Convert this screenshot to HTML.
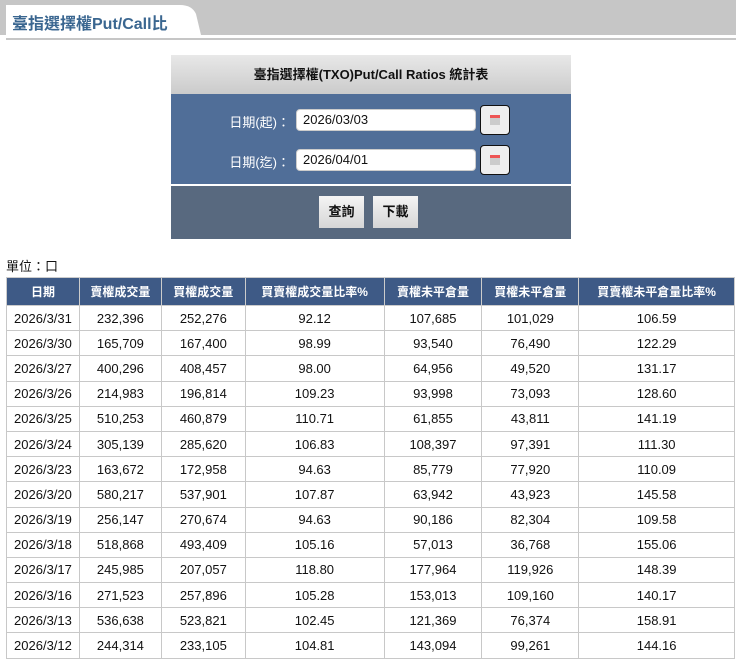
<!DOCTYPE html>
<html><head><meta charset="utf-8"><style>
*{margin:0;padding:0;box-sizing:border-box}
body{width:740px;height:659px;overflow:hidden;background:#fff;font-family:"Liberation Sans","Noto Sans CJK TC",sans-serif;position:relative}
.abs{position:absolute}
.bar{left:0;top:0;width:736px;height:35px;background:#c6c6c6}
.line{left:6px;top:38px;width:730px;height:2px;background:#c6c6c6}
.title{left:12px;top:10px;font-size:16px;font-weight:bold;color:#3a6690}
.fhead{left:171px;top:55px;width:400px;height:39px;background:linear-gradient(#e8e8e8,#cbcbcb);text-align:center;font-size:13px;font-weight:bold;line-height:39px;color:#111}
.fblue{left:171px;top:94px;width:400px;height:91px;background:#506e98;border-bottom:1px solid #fff}
.fdark{left:171px;top:186px;width:400px;height:53px;background:#58697f}
.lbl{color:#fff;font-size:13px;width:120px;text-align:right}
.inp{left:296px;width:180px;height:22px;background:#fff;border-radius:4px;border:1px solid #ccc;font-size:13px;line-height:20px;padding-left:6px;color:#111}
.cal{left:480px;width:30px;height:30px;background:#eee;border:1px solid #111;border-radius:4px}
.cal i{position:absolute;left:9px;top:9px;width:10px;height:10px;background:#ccc;border-top:3px solid #e55}
.btn{top:196px;width:45px;height:32px;background:linear-gradient(#f4f4f4,#d6d6d6);font-size:13px;font-weight:bold;text-align:center;line-height:32px;color:#111}
.unit{left:6px;top:256px;font-size:13px;color:#111}
table{position:absolute;left:6px;top:277px;width:729px;border-collapse:collapse;font-size:13px;color:#111}
th{background:#3e5a86;color:#fff;height:28px;font-size:12px;font-weight:bold;border:1px solid #ccc}
td{height:25.2px;text-align:center;border:1px solid #c8c8c8;padding:0}
</style></head><body>
<div class="abs bar"></div>
<svg class="abs" style="left:0;top:0" width="210" height="36"><path d="M6 5 H180 Q192 5 196 14 L201 35 H6 Z" fill="#fff"/></svg>
<div class="abs line"></div>
<div class="abs title">臺指選擇權Put/Call比</div>
<div class="abs fhead">臺指選擇權(TXO)Put/Call Ratios 統計表</div>
<div class="abs fblue"></div>
<div class="abs fdark"></div>
<div class="abs lbl" style="left:170px;top:112px">日期(起)：</div>
<div class="abs lbl" style="left:170px;top:152px">日期(迄)：</div>
<div class="abs inp" style="top:109px">2026/03/03</div>
<div class="abs inp" style="top:149px">2026/04/01</div>
<div class="abs cal" style="top:105px"><i></i></div>
<div class="abs cal" style="top:145px"><i></i></div>
<div class="abs btn" style="left:319px">查詢</div>
<div class="abs btn" style="left:373px">下載</div>
<div class="abs unit">單位：口</div>
<table>
<colgroup><col style="width:73px"><col style="width:82px"><col style="width:84px"><col style="width:139px"><col style="width:98px"><col style="width:97px"><col style="width:156px"></colgroup>
<tr><th>日期</th><th>賣權成交量</th><th>買權成交量</th><th>買賣權成交量比率%</th><th>賣權未平倉量</th><th>買權未平倉量</th><th>買賣權未平倉量比率%</th></tr>
<tr><td>2026/3/31</td><td>232,396</td><td>252,276</td><td>92.12</td><td>107,685</td><td>101,029</td><td>106.59</td></tr>
<tr><td>2026/3/30</td><td>165,709</td><td>167,400</td><td>98.99</td><td>93,540</td><td>76,490</td><td>122.29</td></tr>
<tr><td>2026/3/27</td><td>400,296</td><td>408,457</td><td>98.00</td><td>64,956</td><td>49,520</td><td>131.17</td></tr>
<tr><td>2026/3/26</td><td>214,983</td><td>196,814</td><td>109.23</td><td>93,998</td><td>73,093</td><td>128.60</td></tr>
<tr><td>2026/3/25</td><td>510,253</td><td>460,879</td><td>110.71</td><td>61,855</td><td>43,811</td><td>141.19</td></tr>
<tr><td>2026/3/24</td><td>305,139</td><td>285,620</td><td>106.83</td><td>108,397</td><td>97,391</td><td>111.30</td></tr>
<tr><td>2026/3/23</td><td>163,672</td><td>172,958</td><td>94.63</td><td>85,779</td><td>77,920</td><td>110.09</td></tr>
<tr><td>2026/3/20</td><td>580,217</td><td>537,901</td><td>107.87</td><td>63,942</td><td>43,923</td><td>145.58</td></tr>
<tr><td>2026/3/19</td><td>256,147</td><td>270,674</td><td>94.63</td><td>90,186</td><td>82,304</td><td>109.58</td></tr>
<tr><td>2026/3/18</td><td>518,868</td><td>493,409</td><td>105.16</td><td>57,013</td><td>36,768</td><td>155.06</td></tr>
<tr><td>2026/3/17</td><td>245,985</td><td>207,057</td><td>118.80</td><td>177,964</td><td>119,926</td><td>148.39</td></tr>
<tr><td>2026/3/16</td><td>271,523</td><td>257,896</td><td>105.28</td><td>153,013</td><td>109,160</td><td>140.17</td></tr>
<tr><td>2026/3/13</td><td>536,638</td><td>523,821</td><td>102.45</td><td>121,369</td><td>76,374</td><td>158.91</td></tr>
<tr><td>2026/3/12</td><td>244,314</td><td>233,105</td><td>104.81</td><td>143,094</td><td>99,261</td><td>144.16</td></tr>
</table>
</body></html>
